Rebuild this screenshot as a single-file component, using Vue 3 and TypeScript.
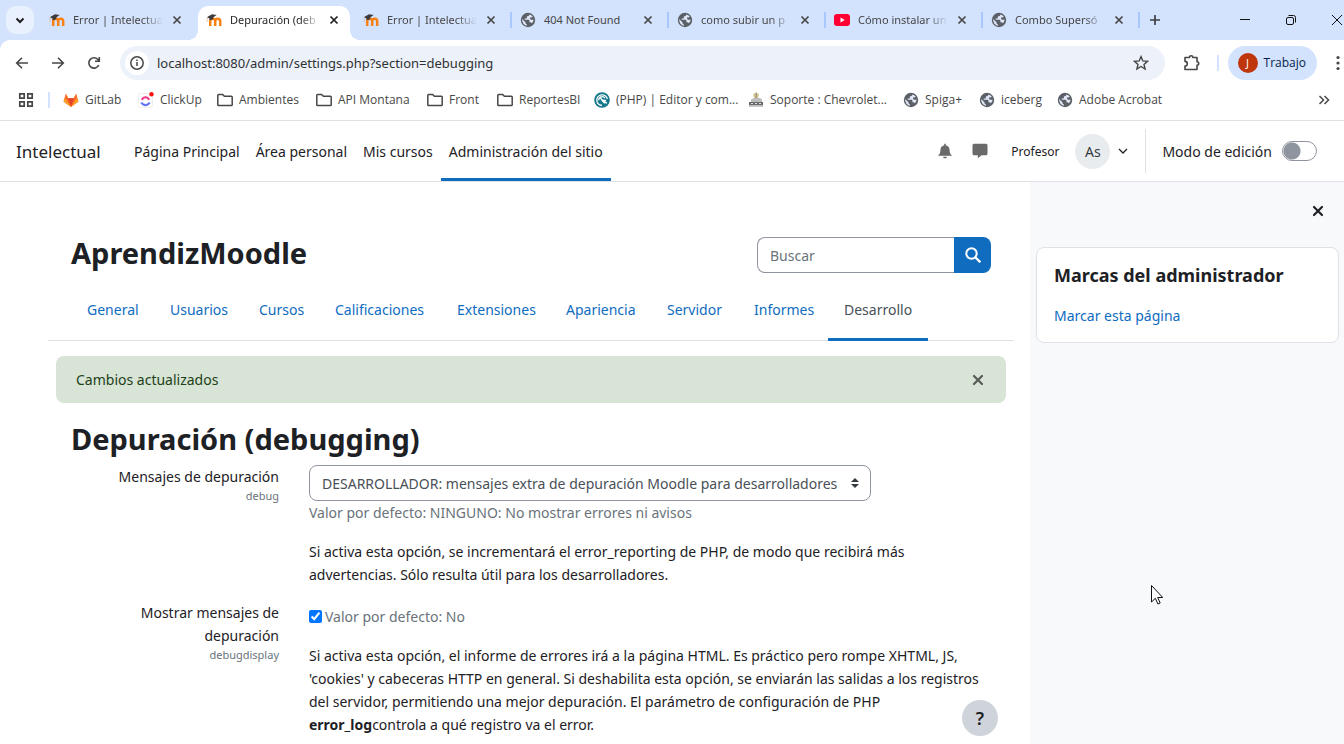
<script setup lang="ts">
import { ref } from 'vue'

interface Tab { title: string; icon: 'moodle' | 'globe' | 'youtube'; active?: boolean; line?: boolean; faded?: boolean }
interface Bookmark { title: string; icon: 'gitlab' | 'clickup' | 'folder' | 'php' | 'support' | 'globe' }

const tabs: Tab[] = [
  { title: 'Error | Intelectua', icon: 'moodle', faded: true },
  { title: 'Depuración (deb', icon: 'moodle', active: true, faded: true },
  { title: 'Error | Intelectua', icon: 'moodle', faded: true },
  { title: '404 Not Found', icon: 'globe', line: true },
  { title: 'como subir un p', icon: 'globe', line: true, faded: true },
  { title: 'Cómo instalar un', icon: 'youtube', line: true, faded: true },
  { title: 'Combo Supersó', icon: 'globe', line: true, faded: true },
]

const bookmarks: Bookmark[] = [
  { title: 'GitLab', icon: 'gitlab' },
  { title: 'ClickUp', icon: 'clickup' },
  { title: 'Ambientes', icon: 'folder' },
  { title: 'API Montana', icon: 'folder' },
  { title: 'Front', icon: 'folder' },
  { title: 'ReportesBI', icon: 'folder' },
  { title: '(PHP) | Editor y com...', icon: 'php' },
  { title: 'Soporte : Chevrolet...', icon: 'support' },
  { title: 'Spiga+', icon: 'globe' },
  { title: 'iceberg', icon: 'globe' },
  { title: 'Adobe Acrobat', icon: 'globe' },
]

const primary = ['Página Principal', 'Área personal', 'Mis cursos', 'Administración del sitio']
const secondary = ['General', 'Usuarios', 'Cursos', 'Calificaciones', 'Extensiones', 'Apariencia', 'Servidor', 'Informes', 'Desarrollo']

const url = ref('localhost:8080/admin/settings.php?section=debugging')
const query = ref('')
const level = ref('dev')
const display = ref(true)
const editing = ref(false)
</script>

<template>
  <div class="window">
    <svg class="defs" aria-hidden="true">
      <symbol id="moodle" viewBox="0 0 16 16">
        <path d="M4.2 14V8.6M4.2 9.4c0-3.4 5-3.4 5 0V14M9.2 9.4c0-3.4 5-3.4 5 0V14" fill="none" stroke="#f98012" stroke-width="2.5" />
        <path d="M.8 5.2 6 2.200l4.600.8-3.200 2.200-.2 2-3.400 1-.6-2z" fill="#3d3a3a" />
        <path d="M1.300 5.400 1 10" stroke="#d9b9a0" stroke-width=".8" />
      </symbol>
      <symbol id="globe" viewBox="0 0 16 16">
        <circle cx="8" cy="8" r="7.200" fill="#5b6067" />
        <path d="M9.400 2.200v.6c0 .8-.6 1.400-1.400 1.400H6.800v1.300c0 .5-.4.9-.9.9H4.600v1.300h3.800c.5 0 .9.400.9.900v1.500h1c.7 0 1.300.4 1.500 1 .9-1 1.500-2.200 1.500-3.600 0-2.400-1.600-4.500-3.900-5.300z" fill="#5b6067" />
        <path d="M2.200 7.100 5.600 10.400v.7c0 .8.600 1.400 1.400 1.400v1.200A5.800 5.800 0 0 1 2.200 7.100zM9.300 2.400c0 1.300-.9 1.900-2.400 1.900v1.200c0 .6-.4 1-1 1H4.700v1.200h3.700c.6 0 1 .4 1 1v1.600h.9c.6 0 1.100.4 1.300 1a5.700 5.700 0 0 0 2.100-3.600h-2.300c-.8 0-1.400-.6-1.400-1.400V5.500h1.400c.8 0 1.200-.5 1.200-1.200a5.700 5.700 0 0 0-3.300-1.900z" fill="#dfe7f7" />
      </symbol>
      <symbol id="youtube" viewBox="0 0 16 16">
        <rect y="2" width="16" height="12" rx="3" fill="#ff0033" /><path d="m6.500 5.500 4.200 2.500-4.200 2.500z" fill="#fff" />
      </symbol>
      <symbol id="gitlab" viewBox="0 0 16 16">
        <path d="m8 15-7.500-5.600L2.800 1.500l2.600 4.800h5.200l2.600-4.800 2.300 7.900z" fill="#fc6d26" />
        <path d="m8 15-3-8.700h6z" fill="#e24329" /><path d="m8 15-7.500-5.600L2 6.300z" fill="#fca326" /><path d="m8 15 7.500-5.600L14 6.300z" fill="#fca326" />
      </symbol>
      <symbol id="clickup" viewBox="0 0 16 16">
        <rect x=".5" y="1.500" width="14" height="14" rx="2" fill="#fff" stroke="#eee" />
        <path d="M4 8a3.600 3.600 0 0 1 7 0" fill="none" stroke="#f23b83" stroke-width="2" />
        <path d="M3.300 10.500c2 3.400 6.400 3.400 8.400 0" fill="none" stroke="#6675f5" stroke-width="2.200" />
        <circle cx="13.500" cy="2.300" r="2.200" fill="#f11" />
      </symbol>
      <symbol id="folder" viewBox="0 0 16 16">
        <path d="M.8 3.200c0-.6.3-.8.800-.8h4l1.800 1.900h7c.5 0 .8.300.8.800v7.700c0 .5-.3.800-.8.800H1.600c-.5 0-.8-.3-.8-.8z" fill="none" stroke="#474747" stroke-width="1.500" />
      </symbol>
      <symbol id="php" viewBox="0 0 16 16">
        <circle cx="8" cy="8" r="7.800" fill="#16788b" />
        <path d="M13.300 7A5.300 5.300 0 1 0 8 13.400M4.600 8.200A3.600 3.600 0 0 1 11 6M6 5.300l3.300 4.300 3.700 1.600" fill="none" stroke="#fff" stroke-width="1.300" />
        <path d="m7 7.300 5.300.7-2 4z" fill="#fff" />
      </symbol>
      <symbol id="support" viewBox="0 0 16 16">
        <path d="M5 1.500h6L10 6H6z" fill="#d9c88f" /><path d="M7.500.5h1.500V6H7.500z" fill="#a09a86" />
        <path d="M3 7.500 6 6h6l2 1.500V10H3z" fill="#bdbdbd" /><path d="M1 10h14v3.500H1z" fill="#6a6a6a" /><path d="M1 13.500h14V15H1z" fill="#c9c9c9" />
        <path d="M3 11.500h2m2 0h2m2 0h2" stroke="#ddd" />
      </symbol>
      <symbol id="cross" viewBox="0 0 16 16"><path d="m4.500 4.500 7 7m0-7-7 7" fill="none" stroke="currentColor" stroke-width="1.700" /></symbol>
      <symbol id="bold-cross" viewBox="0 0 16 16"><path d="m4 4 8 8m0-8-8 8" fill="none" stroke="currentColor" stroke-width="2.200" stroke-linecap="round" /></symbol>
    </svg>

    <header class="browser">
      <div class="tab-strip">
        <button class="tab-search" aria-label="Buscar pestañas"><svg viewBox="0 0 16 16"><path d="m4.500 6.500 3.500 3.500 3.500-3.500" fill="none" stroke="#1f1f1f" stroke-width="2" /></svg></button>
        <div v-for="(tab, i) in tabs" :key="i" class="tab" :class="{ active: tab.active, line: tab.line }">
          <svg class="icon"><use :href="'#' + tab.icon" /></svg>
          <span class="tab-title" :class="{ faded: tab.faded }">{{ tab.title }}</span>
          <button class="tab-close" aria-label="Cerrar pestaña"><svg class="icon"><use href="#cross" /></svg></button>
        </div>
        <button class="new-tab" aria-label="Nueva pestaña"><svg class="icon" viewBox="0 0 16 16"><path d="M8 3v10M3 8h10" stroke="#3b3f45" stroke-width="1.700" /></svg></button>
        <div class="window-controls">
          <button aria-label="Minimizar"><svg viewBox="0 0 16 16"><path d="M3 7.500h10" stroke="#111" /></svg></button>
          <button aria-label="Restaurar"><svg viewBox="0 0 16 16"><rect x="3.500" y="5.500" width="7" height="7" rx="1.500" fill="none" stroke="#111" /><path d="M5.500 3.500h5a2 2 0 0 1 2 2v5" fill="none" stroke="#111" /></svg></button>
          <button aria-label="Cerrar"><svg viewBox="0 0 16 16"><path d="m3 3 10 10m0-10L3 13" stroke="#111" /></svg></button>
        </div>
      </div>

      <div class="toolbar">
        <button aria-label="Atrás"><svg class="icon" viewBox="0 0 16 16"><path d="M14 8H3m5-5.300L2.700 8 8 13.300" fill="none" stroke="currentColor" stroke-width="1.600" /></svg></button>
        <button aria-label="Adelante"><svg class="icon" viewBox="0 0 16 16"><path d="M2 8h11M8 2.700 13.300 8 8 13.300" fill="none" stroke="currentColor" stroke-width="1.600" /></svg></button>
        <button aria-label="Recargar"><svg class="icon" viewBox="0 0 16 16"><path d="M12.800 10a5.200 5.200 0 1 1-.6-5.200l1 1.200M13.300 2v4.200H9" fill="none" stroke="currentColor" stroke-width="1.600" /></svg></button>
        <div class="omnibox">
          <button class="site-info" aria-label="Información del sitio"><svg class="icon" viewBox="0 0 16 16"><circle cx="8" cy="8" r="6.200" fill="none" stroke="currentColor" stroke-width="1.500" /><path d="M8 7v4M8 4.500v1.500" stroke="currentColor" stroke-width="1.500" /></svg></button>
          <input v-model="url" aria-label="Dirección" />
          <button class="star" aria-label="Añadir marcador"><svg class="icon" viewBox="0 0 16 16"><path d="m8 1.600 1.800 4.300 4.700.4L11 9.400l1.100 4.600L8 11.500 3.900 14 5 9.400 1.500 6.300l4.700-.4z" fill="none" stroke="currentColor" stroke-width="1.400" /></svg></button>
        </div>
        <button class="puzzle" aria-label="Extensiones"><svg viewBox="0 0 18 18"><path d="M2 3.500h4.500a1.700 1.700 0 0 1 3.400 0H14v4.300a1.700 1.700 0 0 1 0 3.400V15.500H2V12a2.200 2.200 0 0 0 0-4.600z" fill="none" stroke="currentColor" stroke-width="1.600" stroke-linejoin="round" /></svg></button>
        <span class="divider"></span>
        <button class="profile"><span class="profile-badge">J</span>Trabajo</button>
        <button class="dots" aria-label="Menú"><svg class="icon" viewBox="0 0 16 16"><circle cx="8" cy="2.500" r="1.600" /><circle cx="8" cy="8" r="1.600" /><circle cx="8" cy="13.500" r="1.600" /></svg></button>
      </div>

      <nav class="bookmarks" aria-label="Marcadores">
        <button class="apps" aria-label="Aplicaciones"><svg class="icon" viewBox="0 0 16 16"><path d="M1.800 1.800h4.400v4.400H1.800zM9.800 1.800h4.400v4.400H9.800zM1.800 9.800h4.400v4.400H1.800zM9.800 9.800h4.400v4.400H9.800z" fill="none" stroke="#474747" stroke-width="1.700" /></svg></button>
        <span class="divider"></span>
        <a v-for="b in bookmarks" :key="b.title" href="#"><svg class="icon"><use :href="'#' + b.icon" /></svg>{{ b.title }}</a>
        <button class="more" aria-label="Más marcadores"><svg class="icon" viewBox="0 0 16 16"><path d="m3.500 4 4 4-4 4m5-8 4 4-4 4" fill="none" stroke="#474747" stroke-width="1.500" /></svg></button>
      </nav>
    </header>

    <div class="navbar">
      <a class="brand" href="#">Intelectual</a>
      <nav class="primary" aria-label="Navegación del sitio">
        <a v-for="(item, i) in primary" :key="item" href="#" :class="{ active: i === 3 }">{{ item }}</a>
      </nav>
      <div class="user-nav">
        <button class="nav-icon" aria-label="Notificaciones"><svg class="icon" viewBox="0 0 16 16"><path d="M7.200.8h1.600v1.400c2.700.5 3.800 2.500 3.800 5 0 2.600.8 4 2.200 5.100v.5H1.200v-.5c1.400-1.100 2.200-2.500 2.200-5.100 0-2.500 1.100-4.500 3.800-5zM6 13.800h4c-.3 2-3.700 2-4 0z" /></svg></button>
        <button class="nav-icon" aria-label="Mensajes"><svg class="icon" viewBox="0 0 16 16"><path d="M2 .8h12q1.500 0 1.500 1.500v8.400q0 1.500-1.500 1.500H9.500L5.800 15.300v-3.100H2Q.5 12.200.5 10.700V2.300Q.5.800 2 .8z" /></svg></button>
        <span class="role">Profesor</span>
        <button class="user" aria-label="Menú de usuario"><span class="avatar">As</span><svg viewBox="0 0 10 10"><path d="m1 3 4 4 4-4" fill="none" stroke="#1d2125" stroke-width="1.300" /></svg></button>
        <label class="edit"><span>Modo de edición</span><input v-model="editing" type="checkbox" role="switch" /></label>
      </div>
    </div>

    <div class="page">
      <main>
        <div class="page-head">
          <h1>AprendizMoodle</h1>
          <form class="search" @submit.prevent>
            <input v-model="query" type="text" placeholder="Buscar" aria-label="Buscar" />
            <button aria-label="Buscar"><svg class="icon" viewBox="0 0 16 16"><circle cx="6.500" cy="6.500" r="5.200" fill="none" stroke="#fff" stroke-width="2" /><path d="m10.300 10.300 5 5" stroke="#fff" stroke-width="2.300" /></svg></button>
          </form>
        </div>
        <nav class="secondary" aria-label="Administración">
          <a v-for="item in secondary" :key="item" href="#" :class="{ active: item === 'Desarrollo' }">{{ item }}</a>
        </nav>
        <div class="alert" role="alert">
          <span>Cambios actualizados</span>
          <button aria-label="Descartar"><svg class="icon"><use href="#bold-cross" /></svg></button>
        </div>
        <h2>Depuración (debugging)</h2>
        <div class="setting">
          <div class="setting-name"><label for="debug">Mensajes de depuración</label><small>debug</small></div>
          <div>
            <div class="select">
              <select id="debug" v-model="level"><option value="dev">DESARROLLADOR: mensajes extra de depuración Moodle para desarrolladores</option></select>
              <svg viewBox="0 0 8 10"><path d="M4 0 0 4h8zM4 10 0 6h8z" fill="#343a40" /></svg>
            </div>
            <div class="default">Valor por defecto: NINGUNO: No mostrar errores ni avisos</div>
            <p>Si activa esta opción, se incrementará el error_reporting de PHP, de modo que recibirá más advertencias. Sólo resulta útil para los desarrolladores.</p>
          </div>
        </div>
        <div class="setting">
          <div class="setting-name"><label for="debugdisplay">Mostrar mensajes de depuración</label><small>debugdisplay</small></div>
          <div>
            <div class="check"><input id="debugdisplay" v-model="display" type="checkbox" /><span>Valor por defecto: No</span></div>
            <p>Si activa esta opción, el informe de errores irá a la página HTML. Es práctico pero rompe XHTML, JS, 'cookies' y cabeceras HTTP en general. Si deshabilita esta opción, se enviarán las salidas a los registros del servidor, permitiendo una mejor depuración. El parámetro de configuración de PHP <b>error_log</b>controla a qué registro va el error.</p>
          </div>
        </div>
        <button class="help" aria-label="Ayuda">?</button>
      </main>
      <aside>
        <button class="drawer-close" aria-label="Cerrar bloque"><svg class="icon"><use href="#bold-cross" /></svg></button>
        <section class="block">
          <h3>Marcas del administrador</h3>
          <a href="#">Marcar esta página</a>
        </section>
      </aside>
    </div>

    <svg class="pointer" viewBox="0 0 12 20" aria-hidden="true"><path d="M.5.500v16.500l3.900-3.700 2.500 5.700 2.300-1-2.500-5.500h5z" fill="#fff" stroke="#111" /></svg>
  </div>
</template>

<style>
body { margin: 0; background: #fff; }
</style>

<style scoped>
* { box-sizing: border-box; }
.window {
  position: relative; display: flex; flex-direction: column; height: 100vh; overflow: hidden;
  font-family: "Noto Sans", "Open Sans", sans-serif; font-size: 14px; line-height: 23px; color: #1d2125;
}
.defs { position: absolute; width: 0; height: 0; }
button { display: flex; align-items: center; justify-content: center; padding: 0; border: 0; background: none; color: inherit; font: inherit; flex: none; }
input, select { font: inherit; color: inherit; margin: 0; }
a { color: #0f6cbf; text-decoration: none; white-space: nowrap; }
h1, h2, h3, p { margin: 0; }
.icon { width: 16px; height: 16px; flex: none; fill: currentColor; }

.browser { font-family: "Open Sans", "Noto Sans", sans-serif; font-size: 12px; line-height: 16px; color: #474747; background: #d3e2fd; }
.tab-strip { display: flex; height: 40px; padding-top: 6px; }
.tab-search { width: 28px; height: 28px; margin: 0 7px 0 6px; border-radius: 10px; background: #e9f0fe; }
.tab-search svg { width: 16px; height: 16px; }
.tab { position: relative; flex: 0 1 157px; display: flex; align-items: center; min-width: 0; padding: 0 13px 6px 8px; }
.tab-title { flex: 1; min-width: 0; margin: 0 2px 0 8px; white-space: nowrap; font-family: "Noto Sans", sans-serif; font-size: 11px; }
.tab-title.faded { mask-image: linear-gradient(to right, #000 70px, transparent 90px); }
.tab.line::before { content: ""; position: absolute; left: -2px; top: 6px; width: 2px; height: 16px; background: #a8c7fa; }
.tab.active { color: #1f1f1f; isolation: isolate; }
.tab.active::before { content: ""; position: absolute; z-index: -1; inset: 0 5px 0 0; border-radius: 10px 10px 0 0; background: #fff; }
.tab.active::after {
  content: ""; position: absolute; z-index: -2; left: -10px; right: -5px; bottom: 0; height: 10px;
  background: radial-gradient(circle at 0 0, transparent 10px, #fff 10px) left / 10px 10px no-repeat, radial-gradient(circle at 100% 0, transparent 10px, #fff 10px) right / 10px 10px no-repeat;
}
.new-tab { position: relative; width: 30px; height: 28px; }
.new-tab::before { content: ""; position: absolute; left: -2px; top: 6px; width: 2px; height: 16px; background: #a8c7fa; }
.window-controls { display: flex; margin-left: auto; gap: 30px; padding-bottom: 6px; margin-right: -1px; }
.window-controls svg { width: 16px; height: 16px; }
.toolbar { display: flex; align-items: center; height: 46px; padding: 0 0 0 14px; background: #fff; border-radius: 10px 0 0 0; }
.toolbar > button { flex: none; }
.toolbar > button:nth-child(-n+3) { margin-right: 20px; }
.omnibox { flex: 1; display: flex; align-items: center; height: 34px; margin-left: -2px; padding: 0 16px 0 5px; border-radius: 17px; background: #ecf1fa; }
.omnibox input { flex: 1; min-width: 0; padding: 0; margin: 0 8px; border: 0; background: none; outline: none; color: #303134; font-family: "Noto Sans", sans-serif; font-size: 13px; }
.site-info { width: 24px; height: 24px; border-radius: 50%; background: #fff; }
.puzzle { margin-left: 18px; }
.puzzle svg { width: 18px; height: 18px; }
.divider { width: 2px; height: 16px; background: #d3e2fd; }
.toolbar .divider { margin: 0 9px 0 16px; }
.profile { gap: 6px; height: 34px; padding: 0 11px 0 10px; border-radius: 17px; background: #d3e2fd; color: #041e49; }
.profile-badge { width: 20px; height: 20px; border-radius: 50%; background: #bf360c; color: #fff; font-size: 11px; line-height: 20px; }
.dots { margin: 0 -2px 0 13px; }
.bookmarks {
  display: grid; align-items: center; height: 34px; padding: 0 12px 6px 18px; background: #fff;
  grid-template-columns: 30px 15px 75px 79px 99px 111px 70px 97px 154px 155px 76px 78px 1fr 16px;
}
.bookmarks a { display: flex; align-items: center; gap: 6px; color: #474747; }
.bookmarks button { justify-self: start; }

.navbar { display: flex; flex: none; height: 62px; border: 1px solid #dee2e6; border-width: 1px 0; padding: 0 27px 0 16px; align-items: center; }
.brand { width: 110px; color: #1d2125; font-size: 17px; }
.primary { display: flex; align-self: stretch; }
.primary a { display: flex; align-items: center; padding: 3px 8px 0; border-bottom: 3px solid transparent; color: #1d2125; }
.primary a.active { border-color: #0f6cbf; }
.user-nav { display: flex; align-items: center; margin-left: auto; }
.nav-icon { width: 35px; color: #6a6a6a; }
.role { margin: 0 16px 0 14px; font-size: 12px; }
.user { gap: 8px; margin-right: 17px; }
.user svg { width: 10px; height: 10px; }
.avatar { width: 35px; height: 35px; border-radius: 50%; background: #e9ecef; line-height: 35px; color: #343a40; }
.edit { display: flex; align-items: center; gap: 10px; height: 44px; padding-left: 16px; border-left: 1px solid #dee2e6; }
.edit input { appearance: none; width: 35px; height: 20px; border: 1px solid #8f959e; border-radius: 10px; background: radial-gradient(circle at 9px 9px, #8f959e 8px, transparent 9px) #fff; }

.page { flex: 1; display: flex; min-height: 0; }
main { position: relative; flex: 1; min-width: 0; padding: 55px 16px 0 48px; }
.page-head { display: flex; justify-content: space-between; padding: 0 23px; }
h1, h2 { font-size: 29px; line-height: 32px; }
.search { display: flex; width: 234px; height: 36px; }
.search input { flex: 1; min-width: 0; padding: 0 12px; border: 1px solid #8f959e; border-right: 0; border-radius: 8px 0 0 8px; outline: none; }
.search input::placeholder { color: #6a737b; }
.search button { width: 37px; border-radius: 0 8px 8px 0; background: #0f6cbf; }
.secondary {
  display: grid; grid-template-columns: 83px 89px 76px 122px 109px 101px 87px 90px 100px; height: 62px; margin-top: 6px;
  padding-left: 23px; border-bottom: 1px solid #dee2e6;
}
.secondary a { padding: 19px 0 0 16px; margin-bottom: -1px; }
.secondary a.active { color: #495057; border-bottom: 3px solid #0f6cbf; }
.alert { display: flex; align-items: center; justify-content: space-between; height: 47px; margin: 15px 8px 20px; padding: 0 20px; border-radius: 8px; background: #d8e4d6; color: #1c4117; }
.alert button { color: #565b56; }
h2 { padding-left: 23px; margin-bottom: 10px; }
.setting { display: grid; grid-template-columns: 208px minmax(0, 1fr); column-gap: 30px; padding: 0 23px; margin-bottom: 15px; }
.setting-name { text-align: right; padding-left: 40px; }
.setting-name small { display: block; font-size: 11px; line-height: 16px; color: #6a737b; }
.select { position: relative; width: 562px; max-width: 100%; }
.select select { display: block; appearance: none; width: 100%; height: 36px; padding: 0 24px 0 12px; border: 1px solid #8f959e; border-radius: 8px; background: #fff; color: #495057; }
.select svg { position: absolute; right: 12px; top: 13px; width: 8px; height: 10px; pointer-events: none; }
.default, .check { color: #6a737b; }
.setting p { margin-top: 16px; }
.check { display: flex; align-items: center; gap: 3px; padding-top: 4px; }
.check input { width: 13px; height: 13px; accent-color: #0075ff; }
.help { position: absolute; right: 32px; bottom: 8px; width: 36px; height: 36px; border-radius: 50%; background: #ced4da; font-size: 18px; font-weight: 600; }
aside { width: 314px; flex: none; padding: 21px 5px 0 6px; background: #f8f9fb; }
.drawer-close { margin: 0 13px 28px auto; }
.block { padding: 16px 17px 15px; border: 1px solid #dee2e6; border-radius: 8px; background: #fff; }
h3 { margin-bottom: 17px; font-size: 18px; }
.pointer { position: absolute; left: 1151px; top: 585px; width: 12px; height: 20px; }
</style>
